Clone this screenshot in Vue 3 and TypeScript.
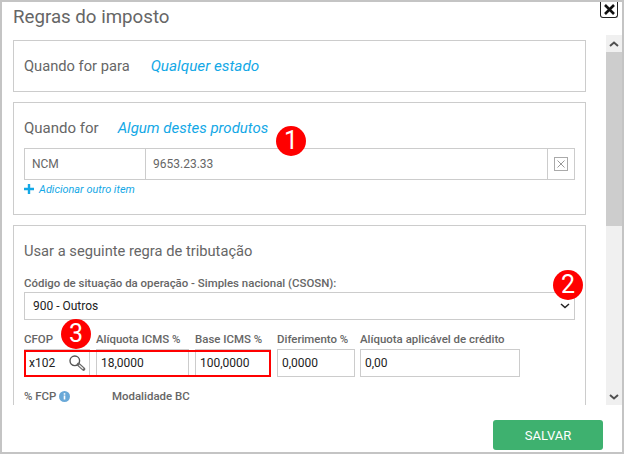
<script setup lang="ts">
const fields = [
  { label: 'Alíquota ICMS %', value: '18,0000', cls: 'w-aliq' },
  { label: 'Base ICMS %', value: '100,0000', cls: 'w-base' },
  { label: 'Diferimento %', value: '0,0000', cls: 'w-dif' },
  { label: 'Alíquota aplicável de crédito', value: '0,00', cls: 'w-cred' },
]
</script>

<template>
  <div class="modal">
    <header class="head">
      <h1 class="title">Regras do imposto</h1>
      <button class="close" aria-label="Fechar">
        <svg width="13" height="13" viewBox="0 0 13 13"><path d="M2 2l9 9M11 2l-9 9" stroke="#111" stroke-width="2.6" fill="none"/></svg>
      </button>
    </header>

    <div class="middle">
      <div class="scroll">
        <section class="panel p1">
          <span class="heading">Quando for para</span>
          <a class="link wide">Qualquer estado</a>
        </section>

        <section class="panel p2">
          <div class="p2-head">
            <span class="heading">Quando for</span>
            <a class="link">Algum destes produtos</a>
          </div>
          <div class="item">
            <div class="cell c-type">NCM</div>
            <div class="cell c-val">9653.23.33</div>
            <div class="c-del">
              <svg width="14" height="14" viewBox="0 0 14 14"><rect x=".5" y=".5" width="13" height="13" fill="#fff" stroke="#aaa"/><path d="M3.5 3.5l7 7M10.5 3.5l-7 7" stroke="#999" fill="none"/></svg>
            </div>
          </div>
          <a class="add">
            <svg width="10" height="10" viewBox="0 0 10 10"><path d="M5 0v10M0 5h10" stroke="#13a8e6" stroke-width="2.4" fill="none"/></svg>
            <span>Adicionar outro item</span>
          </a>
        </section>

        <section class="panel p3">
          <h2 class="sub">Usar a seguinte regra de tributação</h2>
          <label class="lbl">Código de situação da operação - Simples nacional (CSOSN):</label>
          <div class="select">
            <span>900 - Outros</span>
            <svg width="10" height="6" viewBox="0 0 10 6"><path d="M1 1l4 3.5L9 1" stroke="#222" stroke-width="1.5" fill="none"/></svg>
          </div>
          <div class="row">
            <div class="field w-cfop">
              <label class="lbl">CFOP</label>
              <div class="input search">
                <span>x102</span>
                <svg width="17" height="16" viewBox="0 0 17 16"><circle cx="5.8" cy="5.8" r="4.8" fill="none" stroke="#555" stroke-width="1.4"/><path d="M9.5 9.5l5 4.5" stroke="#666" stroke-width="3.6" stroke-linecap="round"/><path d="M10 10l4.2 3.7" stroke="#eee" stroke-width="1.2"/></svg>
              </div>
            </div>
            <div v-for="f in fields" :key="f.label" class="field" :class="f.cls">
              <label class="lbl">{{ f.label }}</label>
              <div class="input">{{ f.value }}</div>
            </div>
          </div>
          <div class="row2">
            <label class="lbl fcp">% FCP
              <svg width="11" height="11" viewBox="0 0 11 11"><circle cx="5.5" cy="5.5" r="5.5" fill="#6aa9d8"/><rect x="4.7" y="4.5" width="1.6" height="4" fill="#fff"/><rect x="4.7" y="2.2" width="1.6" height="1.5" fill="#fff"/></svg>
            </label>
            <label class="lbl">Modalidade BC</label>
          </div>
        </section>
      </div>

      <div class="scrollbar">
        <div class="sb-btn"><svg width="10" height="6" viewBox="0 0 10 6"><path d="M1 5l4-3.5L9 5" stroke="#505050" stroke-width="2" fill="none"/></svg></div>
        <div class="sb-thumb"></div>
        <div class="sb-track"></div>
        <div class="sb-btn"><svg width="10" height="6" viewBox="0 0 10 6"><path d="M1 1l4 3.5L9 1" stroke="#505050" stroke-width="2" fill="none"/></svg></div>
      </div>
    </div>

    <footer class="foot">
      <button class="save">SALVAR</button>
    </footer>

    <div class="badge b1">1</div>
    <div class="badge b2">2</div>
    <div class="badge b3">3</div>
    <div class="redbox"></div>
  </div>
</template>

<style>
html, body { margin: 0; background: #fff; }
</style>

<style scoped>
.modal {
  position: relative;
  width: 624px;
  height: 454px;
  box-sizing: border-box;
  border: 2px solid #c4c4c4;
  background: #fff;
  font-family: Roboto, "Liberation Sans", sans-serif;
  color: #666;
  overflow: hidden;
  display: flex;
  flex-direction: column;
}
.head { height: 33px; flex: none; padding-left: 11px; }
.title { margin: 0; font-size: 18.7px; line-height: 30px; font-weight: 400; color: #666; }
.close {
  position: absolute; top: 0; right: 4px; width: 18px; height: 16px; padding: 0;
  background: #fff; border: 1px solid #222; border-top: 0; border-radius: 0 0 3px 3px;
  display: flex; align-items: center; justify-content: center;
}
.middle { height: 370px; flex: none; display: flex; }
.scroll { width: 604px; overflow: hidden; padding: 5px 0 0 11px; box-sizing: border-box; }
.panel { width: 573px; box-sizing: border-box; border: 1px solid #ccc; margin-bottom: 10px; }
.p1 { height: 52px; padding-left: 10px; display: flex; align-items: center; gap: 21px; }
.p2 { height: 113px; padding: 0 10px; }
.p3 { padding: 15px 10px 0; height: 300px; }
.heading { font-size: 14.7px; color: #666; }
.p2-head .heading { font-size: 15px; }
.link { font-size: 15px; font-style: italic; color: #13a8e6; }
.wide { font-size: 15.3px; }
.p2-head { height: 45px; display: flex; align-items: center; gap: 19px; padding-top: 4px; box-sizing: border-box; }
.item { display: flex; height: 32px; border: 1px solid #ccc; box-sizing: border-box; font-size: 12px; }
.cell { display: flex; align-items: center; border-right: 1px solid #ccc; box-sizing: border-box; }
.c-type { width: 121px; padding-left: 7px; }
.c-val { flex: 1; padding-left: 7px; }
.c-del { width: 26px; display: flex; align-items: center; justify-content: center; }
.add { display: flex; align-items: center; gap: 5px; height: 18px; font-size: 10.9px; font-style: italic; color: #13a8e6; }
.sub { margin: 0 0 16px; font-size: 14.7px; line-height: 20px; font-weight: 400; color: #666; }
.lbl { display: block; font-size: 11.45px; line-height: 13px; font-weight: 500; color: #666; white-space: nowrap; }
.select {
  height: 28px; margin-top: 2px; border: 1px solid #ccc; box-sizing: border-box;
  display: flex; align-items: center; justify-content: space-between;
  padding: 0 4px 0 8px; font-size: 12px; color: #222;
}
.row { display: flex; gap: 6px; margin-top: 13px; }
.field .input { margin-top: 3px; }
.input {
  height: 28px; border: 1px solid #ccc; box-sizing: border-box;
  display: flex; align-items: center; padding-left: 4px; font-size: 12px; color: #222;
}
.search { justify-content: space-between; padding: 0 3px 0 4px; }
.w-cfop { width: 66px; }
.w-aliq { width: 93px; }
.w-base { width: 76px; }
.w-dif { width: 78px; margin-right: -1px; }
.w-cred { width: 160px; }
.row2 { display: flex; margin-top: 13px; }
.fcp { width: 88px; display: flex; align-items: center; gap: 3px; }
.scrollbar { width: 16px; display: flex; flex-direction: column; background: #f0f0f0; }
.sb-btn { height: 17px; flex: none; display: flex; align-items: center; justify-content: center; }
.sb-thumb { height: 174px; flex: none; background: #cdcdcd; }
.sb-track { flex: 1; }
.foot { flex: 1; display: flex; justify-content: flex-end; padding: 15px 19px 0 0; box-sizing: border-box; }
.save {
  width: 110px; height: 30px; border: 0; border-radius: 3px; background: #3eb16f;
  color: #fff; font-family: inherit; font-size: 13px; padding: 0;
}
.badge {
  position: absolute; width: 30px; height: 30px; border-radius: 50%; background: #f00;
  color: #fff; font-size: 25px; line-height: 30px; text-align: center; font-weight: 400;
  font-family: Roboto, sans-serif;
}
.b1 { left: 274px; top: 124px; }
.b2 { left: 551px; top: 268px; }
.b3 { left: 59px; top: 317px; }
.redbox { position: absolute; left: 22px; top: 348px; width: 243px; height: 23px; border: 2px solid #f00; }
</style>
